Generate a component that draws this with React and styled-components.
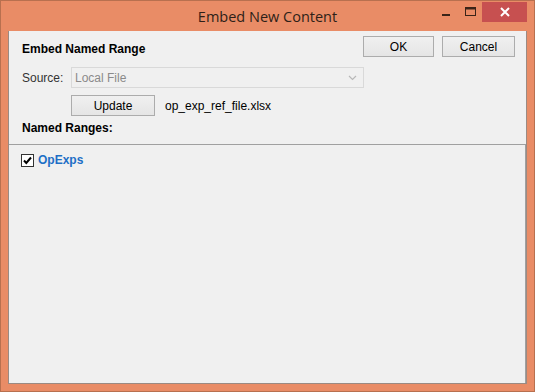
import React from 'react'
import styled, { createGlobalStyle } from 'styled-components';

const GlobalStyle = createGlobalStyle`
    html, body { margin: 0; padding: 0; background: #E98C66; }
    body { font-family: "Liberation Sans", Arial, sans-serif; }
`;

function App() {
  return (
    <WindowStyled>
        <GlobalStyle/>
        <div className='title-bar'>
            <span/>
            <h1>Embed New Content</h1>
            <div className='controls'>
                <CaptionButton aria-label='minimize'>
                    <svg width="10" height="10" viewBox="0 0 10 10"><rect x="1" y="7" width="8" height="2" fill="#3a2418"/></svg>
                </CaptionButton>
                <CaptionButton aria-label='maximize'>
                    <svg width="11" height="10" viewBox="0 0 11 10"><rect x="0.5" y="0.5" width="10" height="8" fill="none" stroke="#3a2418"/><rect x="0.5" y="0.5" width="10" height="2" fill="#3a2418"/></svg>
                </CaptionButton>
                <CaptionButton $close aria-label='close'>
                    <svg width="10" height="10" viewBox="0 0 10 10"><path d="M1 1 L9 9 M9 1 L1 9" stroke="#fff" strokeWidth="2"/></svg>
                </CaptionButton>
            </div>
        </div>
        <div className='client'>
            <div className='header'>
                <div className='top-row'>
                    <h2>Embed Named Range</h2>
                    <div className='actions'>
                        <Button $width={71}>OK</Button>
                        <Button $width={73}>Cancel</Button>
                    </div>
                </div>
                <div className='field-row'>
                    <label>Source:</label>
                    <Select>
                        <span>Local File</span>
                        <svg width="9" height="6" viewBox="0 0 9 6"><path d="M1 1 L4.5 4.5 L8 1" fill="none" stroke="#b8b8b8" strokeWidth="1.2"/></svg>
                    </Select>
                </div>
                <div className='update-row'>
                    <Button $width={84}>Update</Button>
                    <span>op_exp_ref_file.xlsx</span>
                </div>
                <h3>Named Ranges:</h3>
            </div>
            <div className='ranges'>
                <RangeItem>
                    <span className='box'>
                        <svg width="11" height="11" viewBox="0 0 11 11"><path d="M2 5.5 L4.3 8 L9 2.5" fill="none" stroke="#000" strokeWidth="2"/></svg>
                    </span>
                    OpExps
                </RangeItem>
            </div>
        </div>
    </WindowStyled>
  )
}

const CaptionButton = styled.div`
    display: flex;
    align-items: center;
    justify-content: center;
    width: ${props => props.$close ? '45px' : '24px'};
    height: 20px;
    background: ${props => props.$close ? '#C75050' : 'transparent'};
`;

const Button = styled.div`
    width: ${props => props.$width}px;
    height: 21px;
    box-sizing: border-box;
    border: 1px solid #ACACAC;
    background: linear-gradient(#F0F0F0, #E5E5E5);
    display: flex;
    align-items: center;
    justify-content: center;
    font-size: 12px;
    color: #000;
`;

const Select = styled.div`
    width: 293px;
    height: 21px;
    box-sizing: border-box;
    border: 1px solid #D9D9D9;
    background: #F0F0F0;
    display: flex;
    align-items: center;
    justify-content: space-between;
    padding: 0 6px 0 3px;
    font-size: 12px;
    color: #8a8a8a;
`;

const RangeItem = styled.div`
    display: flex;
    align-items: center;
    gap: 4px;
    font-size: 12px;
    font-weight: bold;
    color: #1E6FC6;
    .box{
        width: 13px;
        height: 13px;
        box-sizing: border-box;
        border: 1px solid #333;
        background: #fff;
        display: flex;
        align-items: center;
        justify-content: center;
    }
`;

const WindowStyled = styled.div`
    width: 535px;
    height: 392px;
    box-sizing: border-box;
    border: 1px solid #B8704F;
    background: #E98C66;
    display: flex;
    flex-direction: column;
    .title-bar{
        height: 30px;
        display: grid;
        grid-template-columns: 1fr auto 1fr;
        align-items: start;
        h1{
            margin: 0;
            padding-top: 6px;
            font-family: "Open Sans", "Noto Sans", sans-serif;
            font-weight: normal;
            font-size: 14.5px;
            color: #2e1f18;
        }
        .controls{
            justify-self: end;
            display: flex;
            gap: 0;
            padding-right: 7px;
            margin-top: 1px;
        }
    }
    .client{
        flex: 1;
        margin: 0 7px 7px 7px;
        background: #F0F0F0;
        border: 1px solid #9B8A82;
        border-top: none;
        display: flex;
        flex-direction: column;
        font-size: 12px;
    }
    .header{
        padding: 5px 11px 0 13px;
        h2{
            margin: 6px 0 0 0;
            font-size: 12px;
            font-weight: bold;
        }
        h3{
            margin: 5px 0 0 0;
            font-size: 12px;
            font-weight: bold;
            height: 23px;
        }
    }
    .top-row{
        display: flex;
        justify-content: space-between;
        align-items: flex-start;
        .actions{
            display: flex;
            gap: 8px;
        }
    }
    .field-row{
        display: flex;
        align-items: center;
        margin-top: 10px;
        label{
            width: 49px;
            color: #333;
        }
    }
    .update-row{
        display: flex;
        align-items: center;
        gap: 10px;
        margin-top: 7px;
        padding-left: 49px;
    }
    .ranges{
        flex: 1;
        border-top: 1px solid #A0A0A0;
        border-right: 1px solid #A0A0A0;
        padding: 8px 12px;
    }
`;

export default App
